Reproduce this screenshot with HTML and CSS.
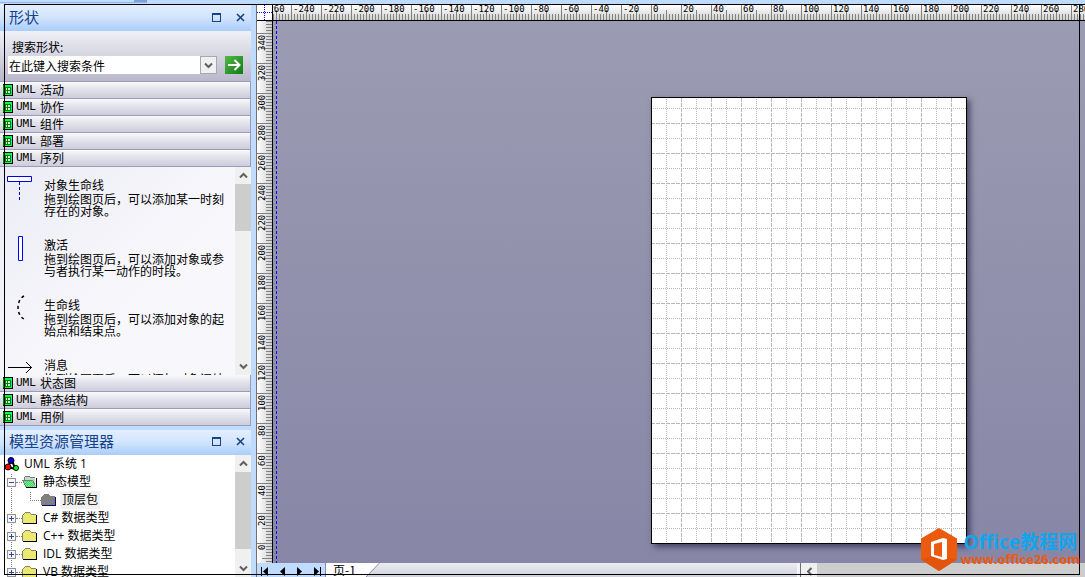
FILE: index.html
```html
<!DOCTYPE html>
<html lang="zh-CN">
<head>
    <meta charset="UTF-8">
    <meta name="viewport" content="width=device-width, initial-scale=1.0">
    <title>UML 序列</title>
    <link rel="stylesheet" href="styles.css">
</head>
<body>

<!-- Símbolos -->
<svg class="defs" width="0" height="0" aria-hidden="true">
    <defs>
        <pattern id="ditherYellow" width="2" height="2" patternUnits="userSpaceOnUse">
            <rect width="2" height="2" fill="#ffff00"/><path d="M0 0h1v1H0zM1 1h1v1H1z" fill="#d8d8d8"/>
        </pattern>
        <pattern id="ditherGreen" width="2" height="2" patternUnits="userSpaceOnUse">
            <rect width="2" height="2" fill="#00ff40"/><path d="M0 0h1v1H0zM1 1h1v1H1z" fill="#b8c8b8"/>
        </pattern>
        <symbol id="stencil" viewBox="0 0 10 12">
            <path fill="#00ff40" d="M0 0h10v12H0z"/>
            <path fill="#00ffd0" d="M1 1h1v10H1zM8 2h1v2H8zM8 6h1v2H8z"/>
            <path fill="#d8ffd8" d="M2 3h6v6H2z"/>
            <path fill="#008000" d="M2 3h6v1H2zM2 6h6v1H2zM2 9h6v1H2zM2 3h1v6H2zM4 3h1v6H4zM7 3h1v6H7z"/>
            <path fill="#000" d="M0 0h10v1H0zM9 0h1v12H9zM0 11h10v1H0z"/>
            <path fill="#008000" d="M0 1h1v10H0z"/>
        </symbol>
        <symbol id="folder" viewBox="0 0 16 14">
            <path d="M1 4h1V3h1V2h5v1h1v1h5v8H1z" fill="url(#ditherYellow)"/>
            <path d="M0 4h1v8H0zM1 3h1v1H1zM2 2h1v1H2zM3 1h5v1H3zM8 2h1v1H8zM9 3h5v1H9z" fill="#808080"/>
            <path d="M1 12h14v1H1zM14 4h1v9h-1z" fill="#000"/>
        </symbol>
        <symbol id="folderOpen" viewBox="0 0 16 14">
            <path d="M2 3h1V2h5v1h5v8H4z" fill="#c8d8c8"/>
            <path d="M1 5h10l3 7H4z" fill="url(#ditherGreen)"/>
            <path d="M0 5h11v1H0zM1 6h1v2H1zM2 8h1v2H2zM3 10h1v2H3zM2 2h1v3H2zM3 1h5v1H3zM8 2h5v1H8zM11 6h1v2h-1zM12 8h1v2h-1z" fill="#708070"/>
            <path d="M4 12h11v1H4zM14 3h1v10h-1z" fill="#000"/>
        </symbol>
        <symbol id="folderGray" viewBox="0 0 16 14">
            <path d="M0 4h1V3h1V2h1V1h5v1h1v1h5v9H0z" fill="#808080"/>
            <path d="M1 12h14v1H1zM14 4h1v9h-1z" fill="#000080"/>
        </symbol>
        <symbol id="plus" viewBox="0 0 9 9">
            <path d="M0 0h9v9H0z" fill="#919191"/><path d="M1 1h7v7H1z" fill="#f6f6f6"/>
            <path d="M2 4h5v1H2zM4 2h1v5H4z" fill="#2b4aa0"/>
        </symbol>
        <symbol id="minus" viewBox="0 0 9 9">
            <path d="M0 0h9v9H0z" fill="#919191"/><path d="M1 1h7v7H1z" fill="#f6f6f6"/>
            <path d="M2 4h5v1H2z" fill="#2b4aa0"/>
        </symbol>
        <symbol id="up" viewBox="0 0 9 7"><path d="M1 5.500l3.500-3.500L8 5.500" fill="none" stroke="#606060" stroke-width="2"/></symbol>
        <symbol id="down" viewBox="0 0 9 7"><path d="M1 1.500L4.500 5 8 1.500" fill="none" stroke="#606060" stroke-width="2"/></symbol>
        <symbol id="restore" viewBox="0 0 9 9"><path d="M0 0h9v9H0zM1 2v6h7V2z" fill="#15428b" fill-rule="evenodd"/></symbol>
        <symbol id="close" viewBox="0 0 9 9"><path d="M1 1l7 7M8 1L1 8" fill="none" stroke="#15428b" stroke-width="1.600"/></symbol>
    </defs>
</svg>

<div class="app">
    <div class="strip"><div class="strip-tab"></div></div>

    <div class="main">
        <aside class="sidebar">
            <!-- Formas -->
            <div class="panel-header">
                <h2>形状</h2>
                <button aria-label="还原"><svg width="9" height="9"><use href="#restore"/></svg></button>
                <button aria-label="关闭"><svg width="9" height="9"><use href="#close"/></svg></button>
            </div>
            <form class="search" onsubmit="return false">
                <label for="search">搜索形状:</label>
                <div class="search-row">
                    <div class="combo">
                        <input type="text" id="search" value="在此键入搜索条件">
                        <button type="button" aria-label="展开"><svg width="9" height="7"><use href="#down"/></svg></button>
                    </div>
                    <button class="go" aria-label="搜索">
                        <svg width="18" height="18"><path d="M3 9h11M9.500 4l5 5-5 5" fill="none" stroke="#fff" stroke-width="2"/></svg>
                    </button>
                </div>
            </form>

            <button class="stencil"><svg width="10" height="12"><use href="#stencil"/></svg><span class="uml">UML</span>活动</button>
            <button class="stencil"><svg width="10" height="12"><use href="#stencil"/></svg><span class="uml">UML</span>协作</button>
            <button class="stencil"><svg width="10" height="12"><use href="#stencil"/></svg><span class="uml">UML</span>组件</button>
            <button class="stencil"><svg width="10" height="12"><use href="#stencil"/></svg><span class="uml">UML</span>部署</button>
            <button class="stencil"><svg width="10" height="12"><use href="#stencil"/></svg><span class="uml">UML</span>序列</button>

            <div class="shapes">
                <ul class="shape-list">
                    <li>
                        <svg width="28" height="28"><path d="M1.500 1.500h24v5h-24z" fill="#fff" stroke="#0000e0"/><path d="M13.500 7v18" stroke="#0000e0" stroke-dasharray="3 2"/></svg>
                        <div><h3>对象生命线</h3><p>拖到绘图页后，可以添加某一时刻存在的对象。</p></div>
                    </li>
                    <li>
                        <svg width="28" height="28"><path d="M12.500 1.500h4v24h-4z" fill="#fff" stroke="#0000ff"/></svg>
                        <div><h3>激活</h3><p>拖到绘图页后，可以添加对象或参与者执行某一动作的时段。</p></div>
                    </li>
                    <li>
                        <svg width="28" height="28"><path d="M18 1c-8 4-8 19 0 23" fill="none" stroke="#000" stroke-width="1.500" stroke-dasharray="3 3"/></svg>
                        <div><h3>生命线</h3><p>拖到绘图页后，可以添加对象的起始点和结束点。</p></div>
                    </li>
                    <li>
                        <svg width="28" height="28"><path d="M2 12.500h24M20 7l5.500 5.500L20 18" fill="none" stroke="#000"/></svg>
                        <div><h3>消息</h3><p>拖到绘图页后，可以添加对象间结</p></div>
                    </li>
                </ul>
                <div class="scrollbar">
                    <button aria-label="向上"><svg width="9" height="7"><use href="#up"/></svg></button>
                    <div class="thumb thumb-shapes"></div>
                    <button class="last" aria-label="向下"><svg width="9" height="7"><use href="#down"/></svg></button>
                </div>
            </div>

            <button class="stencil"><svg width="10" height="12"><use href="#stencil"/></svg><span class="uml">UML</span>状态图</button>
            <button class="stencil"><svg width="10" height="12"><use href="#stencil"/></svg><span class="uml">UML</span>静态结构</button>
            <button class="stencil"><svg width="10" height="12"><use href="#stencil"/></svg><span class="uml">UML</span>用例</button>

            <!-- Modelo -->
            <div class="panel-header model-header">
                <h2>模型资源管理器</h2>
                <button aria-label="还原"><svg width="9" height="9"><use href="#restore"/></svg></button>
                <button aria-label="关闭"><svg width="9" height="9"><use href="#close"/></svg></button>
            </div>
            <div class="model">
                <ul class="tree">
                    <li class="root">
                        <svg width="16" height="15"><path d="M7 3L4 10l7 2L8 3" fill="none" stroke="#000" stroke-width="2"/><circle cx="7" cy="3.500" r="3" fill="#0000e0" stroke="#000"/><circle cx="4" cy="10" r="3" fill="#ff0000" stroke="#000"/><circle cx="12" cy="11" r="2.500" fill="#00ff00" stroke="#000"/></svg>
                        <span>UML 系统 1</span>
                    </li>
                    <li class="node"><svg width="9" height="9"><use href="#minus"/></svg><i></i><svg width="16" height="14"><use href="#folderOpen"/></svg><span>静态模型</span></li>
                    <li class="node child"><i></i><svg width="16" height="14"><use href="#folderGray"/></svg><span class="selected">顶层包</span></li>
                    <li class="node"><svg width="9" height="9"><use href="#plus"/></svg><i></i><svg width="16" height="14"><use href="#folder"/></svg><span>C# 数据类型</span></li>
                    <li class="node"><svg width="9" height="9"><use href="#plus"/></svg><i></i><svg width="16" height="14"><use href="#folder"/></svg><span>C++ 数据类型</span></li>
                    <li class="node"><svg width="9" height="9"><use href="#plus"/></svg><i></i><svg width="16" height="14"><use href="#folder"/></svg><span>IDL 数据类型</span></li>
                    <li class="node"><svg width="9" height="9"><use href="#plus"/></svg><i></i><svg width="16" height="14"><use href="#folder"/></svg><span>VB 数据类型</span></li>
                </ul>
                <div class="scrollbar">
                    <button aria-label="向上"><svg width="9" height="7"><use href="#up"/></svg></button>
                    <div class="thumb thumb-model"></div>
                    <button class="last" aria-label="向下"><svg width="9" height="7"><use href="#down"/></svg></button>
                </div>
            </div>
        </aside>

        <!-- Desenho -->
        <main class="editor">
            <div class="corner"></div>
            <div class="ruler-top">
                <div class="marks">
                    <span>-260</span><span>-240</span><span>-220</span><span>-200</span><span>-180</span><span>-160</span><span>-140</span><span>-120</span><span>-100</span><span>-80</span><span>-60</span><span>-40</span><span>-20</span><span>0</span><span>20</span><span>40</span><span>60</span><span>80</span><span>100</span><span>120</span><span>140</span><span>160</span><span>180</span><span>200</span><span>220</span><span>240</span><span>260</span><span>280</span>
                </div>
            </div>
            <div class="ruler-left">
                <div class="marks">
                    <span></span><span>340</span><span>320</span><span>300</span><span>280</span><span>260</span><span>240</span><span>220</span><span>200</span><span>180</span><span>160</span><span>140</span><span>120</span><span>100</span><span>80</span><span>60</span><span>40</span><span>20</span><span>0</span>
                </div>
            </div>
            <div class="canvas">
                <svg class="page" width="316" height="447">
                    <defs>
                        <pattern id="grid" x="0" y="-4" width="30" height="30" patternUnits="userSpaceOnUse">
                            <path d="M15.500 0v30M0 15.500h30" stroke="#b8b8b8" stroke-dasharray="1 1"/>
                            <path d="M.5 0v30M0 .5h30" stroke="#b8b8b8" stroke-dasharray="4 1"/>
                        </pattern>
                    </defs>
                    <rect width="316" height="447" fill="#fff"/>
                    <rect width="316" height="447" fill="url(#grid)"/>
                    <rect x=".5" y=".5" width="315" height="446" fill="none" stroke="#000"/>
                </svg>
            </div>
            <div class="bottom">
                <div class="pager">
                    <button aria-label="第一页"><svg width="9" height="9"><path d="M0 0h1v9H0zM7 0v9L2 4.500z"/></svg></button>
                    <button aria-label="上一页"><svg width="9" height="9"><path d="M7 0v9L2 4.500z"/></svg></button>
                    <button aria-label="下一页"><svg width="9" height="9"><path d="M2 0v9l5-4.500z"/></svg></button>
                    <button aria-label="最后一页"><svg width="9" height="9"><path d="M2 0v9l5-4.500zM8 0h1v9H8z"/></svg></button>
                </div>
                <button class="tab">页-1</button>
                <svg class="slant" width="14" height="14"><path d="M0 0h14L0 14z" fill="#fff"/><path d="M13.500 0L0 14" stroke="#8a8aa0"/></svg>
                <div class="tab-space"></div>
                <div class="splitter"></div>
                <div class="hscroll">
                    <button aria-label="向左"><svg width="7" height="9"><path d="M5.500 1L2 4.500 5.500 8" fill="none" stroke="#606060" stroke-width="2"/></svg></button>
                    <div class="hthumb"></div>
                </div>
            </div>
        </main>
    </div>

    <div class="frame"></div>

    <div class="watermark">
        <svg width="36" height="43" viewBox="0 0 36 43">
            <path d="M18 0l18 10.500v21L18 43 0 31.500v-21z" fill="#eb5a0f"/>
            <path d="M0 31.500L10 28l17 2 9 1.500L18 43z" fill="#e2540b"/>
            <path d="M10 14l12-4 4 1v20l-4 1-12-4z" fill="#fff"/>
            <path d="M13 16l8-2v15l-8-2z" fill="#eb5a0f"/>
        </svg>
        <div>
            <strong>Office教程网</strong>
            <a href="#">www.office26.com</a>
        </div>
    </div>
</div>

</body>
</html>
```
FILE: styles.css
```css
body {
    font-family: "Open Sans", "Noto Sans CJK SC", sans-serif;
    font-size: 12px;
    margin: 0;
    color: #000;
    background-color: #bfdbff;
}
h2, h3, p, ul {
    margin: 0;
    padding: 0;
    font-weight: normal;
    list-style: none;
}
button {
    font: inherit;
    color: inherit;
    border: none;
    padding: 0;
    background: none;
    display: flex;
    align-items: center;
    justify-content: center;
}
svg {
    flex-shrink: 0;
    display: block;
}
.defs {
    position: absolute;
}
.app {
    position: relative;
    display: flex;
    flex-direction: column;
    height: 100vh;
    overflow: hidden;
}
.strip {
    height: 4px;
}
.strip-tab {
    width: 147px;
    height: 3px;
    background: linear-gradient(to right, #bfdbff 134px, #7ba2d8 134px);
    border-bottom: 1px solid #8fb4e6;
    box-sizing: border-box;
}
.main {
    display: flex;
    flex: 1;
    min-height: 0;
}

/* Painel esquerdo */
.sidebar {
    width: 251px;
    flex-shrink: 0;
    margin-right: 5px;
    display: flex;
    flex-direction: column;
    font-family: "Noto Sans CJK SC", sans-serif;
}
.panel-header {
    display: flex;
    align-items: center;
    flex-shrink: 0;
    gap: 15px;
    height: 27px;
    padding: 0 6px 1px 9px;
    box-sizing: border-box;
    background: linear-gradient(#e3efff, #d2e4fd 50%, #a8cdfd);
    color: #15428b;
}
.panel-header h2 {
    flex: 1;
    font-size: 15px;
    line-height: 20px;
}
.model-header {
    height: 25px;
    margin-top: 4px;
    padding-bottom: 3px;
}
.search {
    height: 51px;
    flex-shrink: 0;
    padding: 6px 8px 0;
    box-sizing: border-box;
    background: linear-gradient(#f0f0f6, #b9b8cc);
    border-bottom: 1px solid #9d9bb8;
}
.search label {
    display: block;
    padding-left: 4px;
    line-height: 19px;
}
.search-row {
    display: flex;
    align-items: center;
    gap: 8px;
}
.combo {
    display: flex;
    flex: 1;
    height: 18px;
    background-color: white;
}
.combo input {
    flex: 1;
    min-width: 0;
    border: none;
    padding: 0 1px;
    font: inherit;
    background: none;
    outline: none;
}
.combo button {
    width: 17px;
    box-sizing: border-box;
    border: 1px solid #a8a8a8;
    background-color: #f0f0f0;
}
.go {
    width: 18px;
    height: 18px;
    background: linear-gradient(135deg, #55b848, #0a7d12);
}
.stencil {
    width: 100%;
    height: 17px;
    flex-shrink: 0;
    justify-content: flex-start;
    gap: 3px;
    padding-left: 3px;
    line-height: 16px;
    border-right: 1px solid #9d9bb8;
    border-bottom: 1px solid #9d9bb8;
    background: linear-gradient(#fafafc, #e9e9f0 30%, #cdccdc);
}
.uml {
    font-family: "DejaVu Sans Mono", monospace;
    font-size: 11px;
    width: 21px;
    text-align: left;
}
.shapes {
    display: flex;
    height: 208px;
    flex-shrink: 0;
    background: linear-gradient(135deg, #ececf5, #f8f8fc 60%);
}
.shape-list {
    flex: 1;
    overflow: hidden;
    padding-top: 8px;
}
.shape-list li {
    display: flex;
    align-items: flex-start;
    gap: 10px;
    height: 60px;
    padding: 0 9px 0 6px;
}
.shape-list h3 {
    font-size: 12px;
    line-height: 16px;
    padding-top: 2px;
}
.shape-list p {
    line-height: 12px;
}
.scrollbar {
    display: flex;
    flex-direction: column;
    width: 16px;
    flex-shrink: 0;
    background-color: #f0f0f0;
}
.scrollbar button {
    height: 17px;
}
.scrollbar .last {
    margin-top: auto;
}
.thumb {
    background-color: #cdcdcd;
}
.thumb-shapes {
    height: 47px;
}
.thumb-model {
    height: 77px;
}
.model {
    display: flex;
    flex: 1;
    min-height: 0;
    background-color: white;
}
.tree {
    flex: 1;
    overflow: hidden;
    font-family: "Open Sans", "Noto Sans CJK SC", sans-serif;
    background: repeating-linear-gradient(white 0 1px, transparent 1px 2px), linear-gradient(#808080, #808080) 11px 18px / 1px 100% no-repeat;
}
.tree li {
    display: flex;
    align-items: center;
    height: 18px;
    line-height: 18px;
}
.tree .root {
    gap: 4px;
    padding-left: 4px;
    background-color: white;
}
.tree .node {
    padding-left: 7px;
}
.tree .node i {
    width: 6px;
    border-top: 1px dotted #808080;
}
.tree .node span {
    padding-left: 5px;
}
.tree .child {
    padding-left: 30px;
}
.tree .child i {
    width: 10px;
    height: 8px;
    border-top: none;
    border-left: 1px dotted #808080;
    border-bottom: 1px dotted #808080;
    margin-bottom: 8px;
}
.tree .node .selected {
    background-color: #f0f0f0;
    margin-left: 3px;
    padding: 0 2px;
}

/* Réguas e página */
.editor {
    display: grid;
    grid-template-columns: 16px minmax(0, 1fr);
    grid-template-rows: 16px minmax(0, 1fr) 14px;
    flex: 1;
    min-width: 0;
    border-left: 1px solid #707070;
    border-top: 1px solid #000;
}
.corner {
    border-right: 1px solid #000;
    border-bottom: 1px solid #000;
    background:
        repeating-linear-gradient(to right, #0000ff 0 1px, transparent 1px 2px) 0 7px / 100% 1px no-repeat,
        repeating-linear-gradient(#0000ff 0 1px, transparent 1px 2px) 7px 0 / 1px 100% no-repeat,
        white;
}
.ruler-top, .ruler-left {
    overflow: hidden;
    font-family: "DejaVu Sans Mono", monospace;
    font-size: 9px;
    line-height: 9px;
}
.ruler-top {
    border-bottom: 1px solid #000;
    background: linear-gradient(#fff, #d0d0d0);
}
.ruler-top .marks {
    display: flex;
    margin-left: -12px;
}
.ruler-top span {
    width: 30px;
    height: 15px;
    flex-shrink: 0;
    box-sizing: border-box;
    padding-left: 2px;
    background:
        linear-gradient(#808080, #808080) 0 0 / 1px 15px no-repeat,
        linear-gradient(#808080, #808080) 15px 100% / 1px 10px no-repeat,
        repeating-linear-gradient(to right, #808080 0 1px, transparent 1px 3px) 0 100% / 100% 6px no-repeat;
}
.ruler-left {
    border-right: 1px solid #000;
    background: linear-gradient(to right, #fff, #d0d0d0);
}
.ruler-left .marks {
    display: flex;
    flex-direction: column;
    margin-top: -18px;
}
.ruler-left span {
    writing-mode: vertical-rl;
    transform: rotate(180deg);
    width: 15px;
    height: 30px;
    flex-shrink: 0;
    box-sizing: border-box;
    padding: 0 1px 2px 0;
    text-align: right;
    background:
        linear-gradient(#808080, #808080) 0 100% / 15px 1px no-repeat,
        linear-gradient(#808080, #808080) 0 14px / 10px 1px no-repeat,
        repeating-linear-gradient(to top, #808080 0 1px, transparent 1px 3px) 0 0 / 6px 100% no-repeat;
}
.canvas {
    position: relative;
    overflow: hidden;
    background:
        repeating-linear-gradient(#0000ff 0 3px, transparent 3px 5px) 3px 0 / 1px 100% no-repeat,
        linear-gradient(#9b9bb3, #8886a6);
}
.page {
    position: absolute;
    left: 378px;
    top: 76px;
    box-shadow: 3px 3px 6px rgba(20, 20, 50, 0.6);
}
.bottom {
    grid-column: 1 / 3;
    display: flex;
    background: linear-gradient(#ececf3, #d0d0de);
}
.pager {
    display: flex;
    align-items: center;
    justify-content: space-between;
    width: 69px;
    padding: 2px 4px 0;
    box-sizing: border-box;
    background-color: #bfdbff;
    border-right: 1px solid #8a8aa0;
}
.tab {
    padding: 0 2px 0 7px;
    width: 40px;
    box-sizing: border-box;
    white-space: nowrap;
    justify-content: flex-start;
    font-family: "Noto Sans CJK SC", sans-serif;
    line-height: 14px;
    background-color: white;
}
.tab-space {
    flex: 47;
}
.splitter {
    box-sizing: border-box;
    width: 4px;
    border-left: 3px solid #f4f4f8;
    border-right: 1px solid #707070;
}
.hscroll {
    display: flex;
    flex: 32;
    background-color: #f0f0f0;
}
.hscroll button {
    width: 16px;
    padding-top: 2px;
}
.hthumb {
    flex: 1;
    background-color: #cdcdcd;
}

/* Moldura e marca por cima de tudo */
.frame {
    position: absolute;
    inset: 4px 5px 2px 4px;
    border: 1px solid #000;
    pointer-events: none;
}
.watermark {
    position: absolute;
    right: 5px;
    bottom: 6px;
    display: flex;
    align-items: center;
    gap: 3px;
}
.watermark strong {
    display: block;
    padding-left: 3px;
    font-size: 19px;
    line-height: 19px;
    color: #12a5ee;
}
.watermark a {
    display: block;
    font-size: 13px;
    font-weight: bold;
    line-height: 14px;
    color: #eb5a0f;
    text-decoration: none;
}
```
